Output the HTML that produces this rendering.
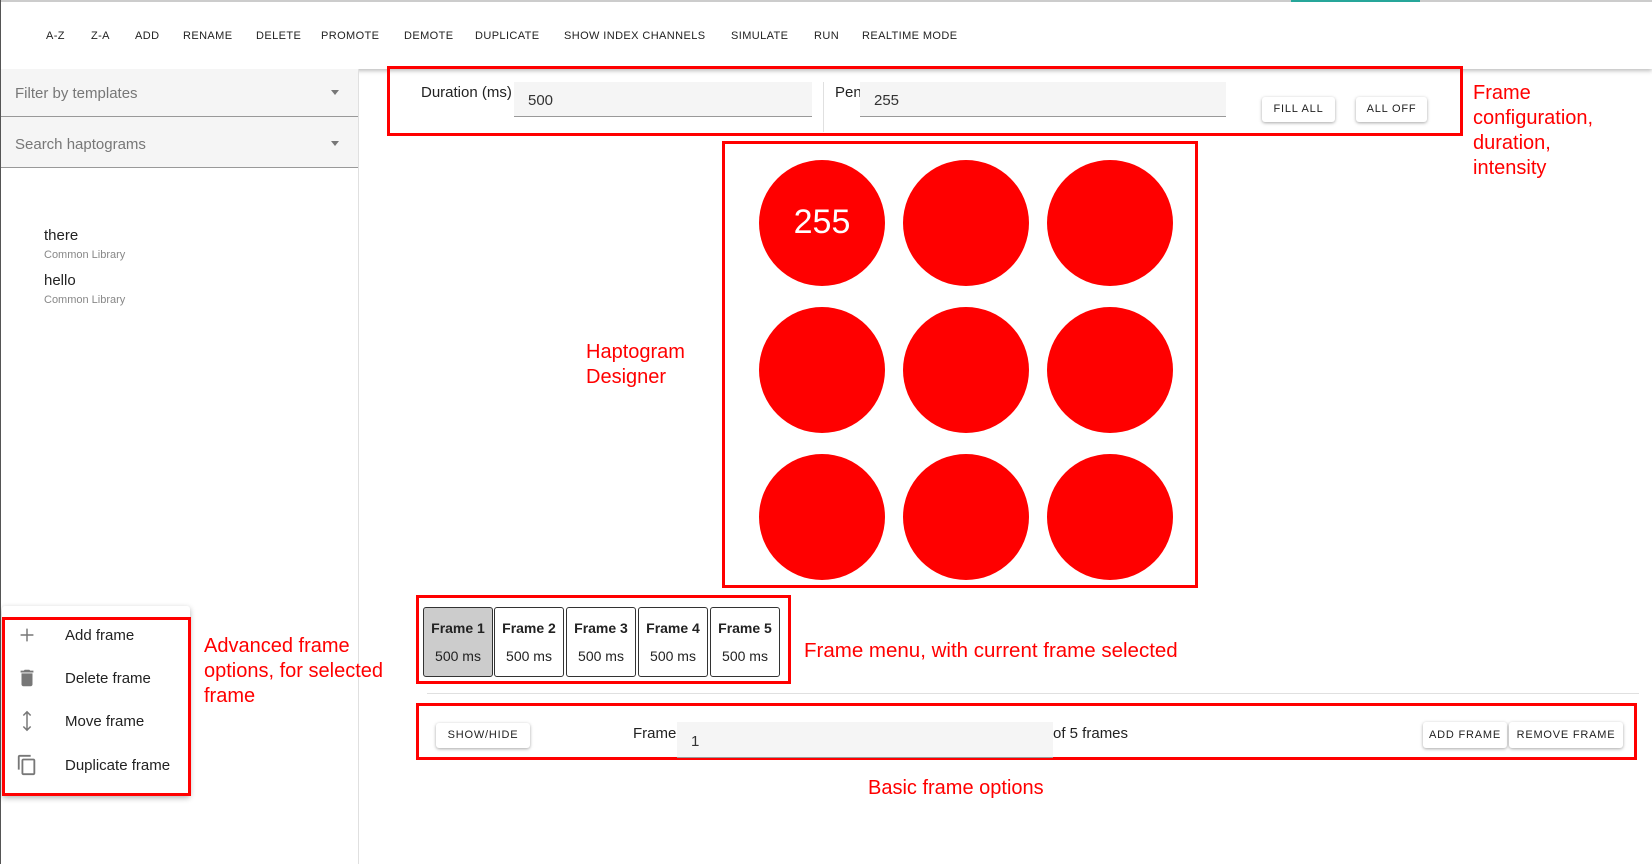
<!DOCTYPE html>
<html><head><meta charset="utf-8"><style>
*{box-sizing:border-box;margin:0;padding:0}
body{width:1652px;height:864px;overflow:hidden;background:#fff;font-family:"Liberation Sans","DejaVu Sans",sans-serif;color:#222;position:relative}
.a{position:absolute;white-space:nowrap}
.tb{font-size:11px;letter-spacing:.4px;color:#222;top:30px}
.red{border:3px solid #f00}
.ann{color:#f00;font-size:20px;line-height:25px}
.inp{background:#f5f5f5;border-bottom:1px solid #999;font-size:15px;color:#333;padding:10px 14px}
.btn{background:#fff;box-shadow:0 1px 3px rgba(0,0,0,.35);border-radius:3px;font-size:11px;letter-spacing:.8px;text-align:center;color:#222}
.c{position:absolute;width:126px;height:126px;border-radius:50%;background:#f00}
.fr{position:absolute;top:607px;width:70px;height:70px;border:1px solid #333;border-radius:3px;text-align:center;background:#fff}
.fr b{display:block;font-size:14px;margin-top:12px}
.fr span{display:block;font-size:14px;margin-top:12px}
.mi{position:absolute;left:65px;font-size:15px;color:#222}
</style></head><body>
<div class="a" style="left:0;top:0;width:1652px;height:69px;background:#fff;box-shadow:0 2px 4px rgba(0,0,0,.25);border-top:2px solid #ccc"></div>
<div class="a" style="left:1291px;top:0;width:129px;height:2px;background:#26a69a"></div>
<div class="a" style="left:0;top:0;width:1px;height:864px;background:#555"></div>
<div class="a tb" style="left:46px">A-Z</div>
<div class="a tb" style="left:91px">Z-A</div>
<div class="a tb" style="left:135px">ADD</div>
<div class="a tb" style="left:183px">RENAME</div>
<div class="a tb" style="left:256px">DELETE</div>
<div class="a tb" style="left:321px">PROMOTE</div>
<div class="a tb" style="left:404px">DEMOTE</div>
<div class="a tb" style="left:475px">DUPLICATE</div>
<div class="a tb" style="left:564px">SHOW INDEX CHANNELS</div>
<div class="a tb" style="left:731px">SIMULATE</div>
<div class="a tb" style="left:814px">RUN</div>
<div class="a tb" style="left:862px">REALTIME MODE</div>

<div class="a" style="left:1px;top:69px;width:357px;height:99px;background:#f5f5f5"></div>
<div class="a" style="left:1px;top:116px;width:357px;height:1px;background:#999"></div>
<div class="a" style="left:1px;top:167px;width:357px;height:1px;background:#999"></div>
<div class="a" style="left:358px;top:69px;width:1px;height:795px;background:#e0e0e0"></div>
<div class="a" style="left:15px;top:85px;font-size:15px;color:#777">Filter by templates</div>
<div class="a" style="left:15px;top:136px;font-size:15px;color:#777">Search haptograms</div>
<div class="a" style="left:331px;top:90px;border:4px solid transparent;border-top:5px solid #777"></div>
<div class="a" style="left:331px;top:141px;border:4px solid transparent;border-top:5px solid #777"></div>
<div class="a" style="left:44px;top:227px;font-size:15px">there</div>
<div class="a" style="left:44px;top:249px;font-size:11px;color:#888">Common Library</div>
<div class="a" style="left:44px;top:272px;font-size:15px">hello</div>
<div class="a" style="left:44px;top:294px;font-size:11px;color:#888">Common Library</div>

<div class="a red" style="left:387px;top:66px;width:1076px;height:70px"></div>
<div class="a" style="left:421px;top:84px;font-size:15px">Duration (ms)</div>
<div class="a inp" style="left:514px;top:82px;width:298px;height:35px">500</div>
<div class="a" style="left:823px;top:82px;width:1px;height:50px;background:#e0e0e0"></div>
<div class="a" style="left:835px;top:84px;font-size:15px">Pen</div>
<div class="a inp" style="left:860px;top:82px;width:366px;height:35px">255</div>
<div class="a btn" style="left:1262px;top:97px;width:73px;height:25px;line-height:25px">FILL ALL</div>
<div class="a btn" style="left:1356px;top:97px;width:71px;height:25px;line-height:25px">ALL OFF</div>
<div class="a ann" style="left:1473px;top:81px">Frame<br>configuration,<br>duration,<br>intensity</div>

<div class="a red" style="left:722px;top:141px;width:476px;height:447px"></div>
<div class="c" style="left:759px;top:160px;color:#fff;font-size:34px;text-align:center;line-height:124px">255</div>
<div class="c" style="left:903px;top:160px"></div>
<div class="c" style="left:1047px;top:160px"></div>
<div class="c" style="left:759px;top:307px"></div>
<div class="c" style="left:903px;top:307px"></div>
<div class="c" style="left:1047px;top:307px"></div>
<div class="c" style="left:759px;top:454px"></div>
<div class="c" style="left:903px;top:454px"></div>
<div class="c" style="left:1047px;top:454px"></div>
<div class="a ann" style="left:586px;top:340px">Haptogram<br>Designer</div>

<div class="a red" style="left:416px;top:595px;width:375px;height:89px"></div>
<div class="fr" style="left:423px;background:#ccc"><b>Frame 1</b><span>500 ms</span></div>
<div class="fr" style="left:494px"><b>Frame 2</b><span>500 ms</span></div>
<div class="fr" style="left:566px"><b>Frame 3</b><span>500 ms</span></div>
<div class="fr" style="left:638px"><b>Frame 4</b><span>500 ms</span></div>
<div class="fr" style="left:710px"><b>Frame 5</b><span>500 ms</span></div>
<div class="a ann" style="left:804px;top:638px;font-size:20.5px">Frame menu, with current frame selected</div>
<div class="a" style="left:427px;top:693px;width:1212px;height:1px;background:#e0e0e0"></div>

<div class="a red" style="left:416px;top:703px;width:1221px;height:57px"></div>
<div class="a btn" style="left:436px;top:723px;width:94px;height:25px;line-height:25px">SHOW/HIDE</div>
<div class="a" style="left:633px;top:725px;font-size:15px">Frame</div>
<div class="a inp" style="left:677px;top:722px;width:376px;height:36px;padding-top:11px">1</div>
<div class="a" style="left:1053px;top:725px;font-size:15px">of 5 frames</div>
<div class="a btn" style="left:1423px;top:722px;width:84px;height:26px;line-height:26px">ADD FRAME</div>
<div class="a btn" style="left:1509px;top:722px;width:114px;height:26px;line-height:26px">REMOVE FRAME</div>
<div class="a ann" style="left:868px;top:776px">Basic frame options</div>

<div class="a" style="left:2px;top:606px;width:188px;height:190px;background:#fff;box-shadow:0 2px 6px rgba(0,0,0,.3);border-radius:3px"></div>
<div class="a red" style="left:2px;top:617px;width:189px;height:179px"></div>
<svg class="a" style="left:16px;top:624px" width="22" height="22" viewBox="0 0 24 24"><path d="M12 5v14M5 12h14" stroke="#777" stroke-width="1.6" fill="none"/></svg>
<svg class="a" style="left:16px;top:667px" width="22" height="22" viewBox="0 0 24 24"><path d="M6 19c0 1.1.9 2 2 2h8c1.1 0 2-.9 2-2V7H6v12zM19 4h-3.5l-1-1h-5l-1 1H5v2h14V4z" fill="#777"/></svg>
<svg class="a" style="left:16px;top:710px" width="22" height="22" viewBox="0 0 24 24"><path d="M12 2v20M8 6l4-4 4 4M8 18l4 4 4-4" stroke="#777" stroke-width="1.6" fill="none"/></svg>
<svg class="a" style="left:16px;top:754px" width="22" height="22" viewBox="0 0 24 24"><path d="M16 1H4c-1.1 0-2 .9-2 2v14h2V3h12V1zm3 4H8c-1.1 0-2 .9-2 2v14c0 1.1.9 2 2 2h11c1.1 0 2-.9 2-2V7c0-1.1-.9-2-2-2zm0 16H8V7h11v14z" fill="#777"/></svg>
<div class="mi" style="top:627px">Add frame</div>
<div class="mi" style="top:670px">Delete frame</div>
<div class="mi" style="top:713px">Move frame</div>
<div class="mi" style="top:757px">Duplicate frame</div>
<div class="a ann" style="left:204px;top:634px">Advanced frame<br>options, for selected<br>frame</div>
</body></html>
